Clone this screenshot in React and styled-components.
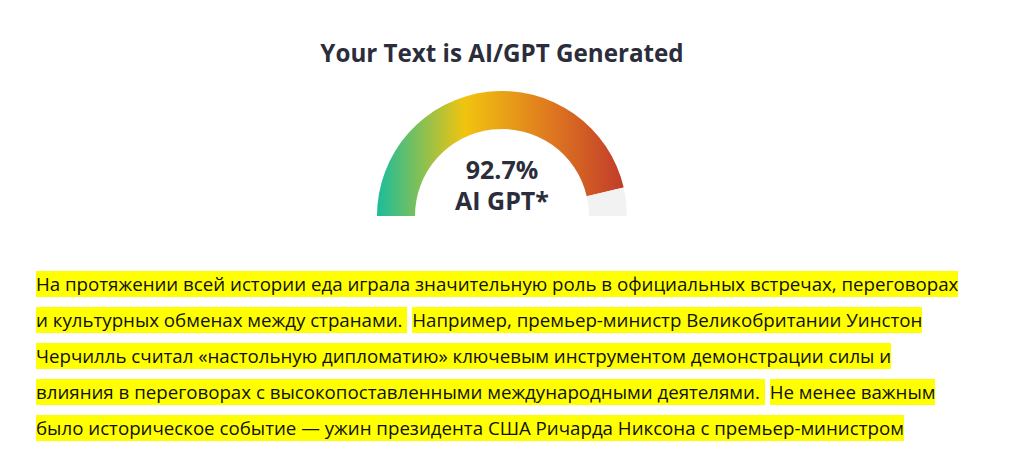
import React from "react";
import styled, { createGlobalStyle } from "styled-components";

const GlobalStyle = createGlobalStyle`
  html, body {
    margin: 0;
    padding: 0;
    background: #ffffff;
  }
  body {
    font-family: "Open Sans", "Noto Sans", "DejaVu Sans", sans-serif;
  }
`;

const Page = styled.div`
  width: 932px;
  padding: 37px 0 0 36px;
  display: flex;
  flex-direction: column;
  align-items: center;
`;

const Title = styled.h1`
  margin: 0;
  font-size: 24.2px;
  line-height: 32px;
  font-weight: 700;
  color: #2b2d3b;
`;

const GaugeBox = styled.div`
  position: relative;
  width: 250px;
  height: 125px;
  margin-top: 22px;

  svg {
    display: block;
  }
`;

const GaugeLabel = styled.div`
  position: absolute;
  left: 0;
  right: 0;
  bottom: 0;
  text-align: center;
  font-size: 25px;
  line-height: 31px;
  font-weight: 700;
  color: #2b2d3b;
`;

const Text = styled.p`
  align-self: stretch;
  margin: 50px 0 0;
  font-size: 18.7px;
  line-height: 36px;
  color: #111111;
`;

// each sentence is its own highlight, a small white gap between them
const Mark = styled.span`
  background: #ffff00;
  padding: 0 0 1px;

  & + & {
    margin-left: 5px;
  }
`;

const sentences = [
  "На протяжении всей истории еда играла значительную роль в официальных встречах, переговорах и культурных обменах между странами.",
  "Например, премьер-министр Великобритании Уинстон Черчилль считал «настольную дипломатию» ключевым инструментом демонстрации силы и влияния в переговорах с высокопоставленными международными деятелями.",
  "Не менее важным было историческое событие — ужин президента США Ричарда Никсона с премьер-министром",
];

const Gauge = ({ value }) => {
  const R = 125;
  const r = 87;
  const a = Math.PI * (1 - value / 100);
  const ox = R + R * Math.cos(a);
  const oy = R - R * Math.sin(a);
  const ix = R + r * Math.cos(a);
  const iy = R - r * Math.sin(a);

  const filled = `M 0 ${R} A ${R} ${R} 0 0 1 ${ox} ${oy} L ${ix} ${iy} A ${r} ${r} 0 0 0 ${R - r} ${R} Z`;
  const rest = `M ${ox} ${oy} A ${R} ${R} 0 0 1 ${2 * R} ${R} L ${R + r} ${R} A ${r} ${r} 0 0 0 ${ix} ${iy} Z`;

  return (
    <GaugeBox>
      <svg width="250" height="125" viewBox="0 0 250 125">
        <defs>
          <linearGradient id="gaugeFill" gradientUnits="userSpaceOnUse" x1="0" y1="0" x2="250" y2="0">
            <stop offset="0" stopColor="#1abc9c" />
            <stop offset="0.35" stopColor="#f1c40f" />
            <stop offset="0.68" stopColor="#e07b1f" />
            <stop offset="1" stopColor="#c0392b" />
          </linearGradient>
        </defs>
        <path d={filled} fill="url(#gaugeFill)" />
        <path d={rest} fill="#f2f2f2" />
      </svg>
      <GaugeLabel>
        {value}%
        <br />
        AI GPT*
      </GaugeLabel>
    </GaugeBox>
  );
};

const App = () => {
  return (
    <>
      <GlobalStyle />
      <Page>
        <Title>Your Text is AI/GPT Generated</Title>
        <Gauge value={92.7} />
        <Text>
          {sentences.map((s, i) => (
            <Mark key={i}>{s} </Mark>
          ))}
        </Text>
      </Page>
    </>
  );
};

export default App;
